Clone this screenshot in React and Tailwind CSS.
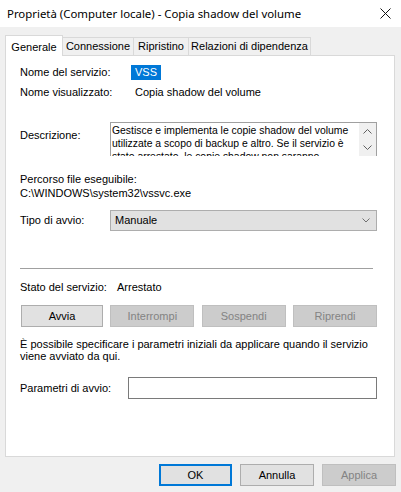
import React from "react";

const ui = { fontFamily: '"Liberation Sans", Arial, sans-serif' };
const title = { fontFamily: '"Noto Sans", "Open Sans", sans-serif' };

function Chevron({ up = false }) {
  return (
    <svg width="9" height="6" viewBox="0 0 9 6" className="block">
      <path
        d={up ? "M0.5 5.5 L4.5 1.5 L8.5 5.5" : "M0.5 0.5 L4.5 4.5 L8.5 0.5"}
        fill="none"
        stroke="#606060"
        strokeWidth="1"
      />
    </svg>
  );
}

function Btn({ children, disabled = false, focus = false, className = "" }) {
  const base = disabled
    ? "bg-[#cccccc] border-[#bfbfbf] text-[#838383]"
    : focus
    ? "bg-[#e1e1e1] border-[#0078d7] border-2 text-black"
    : "bg-[#e1e1e1] border-[#adadad] text-black";
  return (
    <div className={`flex items-center justify-center border ${base} ${className}`}>
      {children}
    </div>
  );
}

export default function App() {
  const tabs = [
    { label: "Generale", w: "w-[58px]" },
    { label: "Connessione", w: "w-[71px]" },
    { label: "Ripristino", w: "w-[55px]" },
    { label: "Relazioni di dipendenza", w: "w-[122px]" },
  ];

  const desc = [
    "Gestisce e implementa le copie shadow del volume",
    "utilizzate a scopo di backup e altro. Se il servizio è",
    "stato arrestato, le copie shadow non saranno",
  ];

  return (
    <div className="w-[401px] h-[492px] bg-[#f0f0f0] text-[11px] text-black overflow-hidden" style={ui}>
      {/* title bar */}
      <div className="h-[27px] bg-white flex items-center justify-between pl-[7px] pr-[10px]">
        <span className="text-[11.4px] text-black" style={title}>
          Proprietà (Computer locale) - Copia shadow del volume
        </span>
        <svg width="11" height="11" viewBox="0 0 11 11">
          <path d="M0.5 0.5 L10.5 10.5 M10.5 0.5 L0.5 10.5" stroke="#111" strokeWidth="1" />
        </svg>
      </div>

      {/* tabs */}
      <div className="pl-[5px] flex items-end h-[28px]">
        {tabs.map((t, i) =>
          i === 0 ? (
            <div
              key={t.label}
              className={`${t.w} h-[21px] bg-white border border-b-0 border-[#d9d9d9] flex items-start justify-center pt-[3px] relative z-10 -mb-px`}
            >
              {t.label}
            </div>
          ) : (
            <div
              key={t.label}
              className={`${t.w} h-[18px] bg-[#f0f0f0] border border-b-0 border-l-0 border-[#d9d9d9] flex items-center justify-center`}
            >
              {t.label}
            </div>
          )
        )}
      </div>

      {/* panel */}
      <div className="ml-[5px] w-[390px] h-[402px] bg-white border border-[#d9d9d9] pl-[14px] pr-[17px]">
        <div className="flex items-center h-[16px] mt-[8px]">
          <span className="w-[111px]">Nome del servizio:</span>
          <span className="bg-[#0078d7] text-white px-[4px] h-[15px] flex items-center">VSS</span>
        </div>
        <div className="flex items-center h-[16px] mt-[4px]">
          <span className="w-[111px]">Nome visualizzato:</span>
          <span className="pl-[4px]">Copia shadow del volume</span>
        </div>

        <div className="flex items-start mt-[22px]">
          <span className="w-[90px] mt-[5px]">Descrizione:</span>
          <div className="w-[267px] h-[34px] border border-b-0 border-[#a0a0a0] flex overflow-hidden">
            <div className="flex-1 pl-px pt-px text-[10.4px] leading-[13px] overflow-hidden">
              {desc.map((l) => (
                <div key={l} className="whitespace-nowrap">{l}</div>
              ))}
            </div>
            <div className="w-[17px] bg-[#f0f0f0] flex flex-col items-center justify-between py-[5px]">
              <Chevron up />
              <Chevron />
            </div>
          </div>
        </div>

        <div className="mt-[16px] leading-[14px]">Percorso file eseguibile:</div>
        <div className="leading-[14px]">C:\WINDOWS\system32\vssvc.exe</div>

        <div className="flex items-center mt-[10px]">
          <span className="w-[90px]">Tipo di avvio:</span>
          <div className="w-[267px] h-[21px] bg-[#e1e1e1] border border-[#adadad] flex items-center justify-between pl-[4px] pr-[6px]">
            <span>Manuale</span>
            <svg width="8" height="5" viewBox="0 0 8 5">
              <path d="M0.5 0.5 L4 4 L7.5 0.5" fill="none" stroke="#707070" strokeWidth="1" />
            </svg>
          </div>
        </div>

        <div className="mt-[37px] h-px w-[353px] bg-[#a0a0a0]" />

        <div className="flex items-center h-[16px] mt-[10px]">
          <span className="w-[97px]">Stato del servizio:</span>
          <span>Arrestato</span>
        </div>

        <div className="flex justify-between mt-[10px] pl-px">
          <Btn className="w-[82px] h-[22px]">Avvia</Btn>
          <Btn disabled className="w-[84px] h-[22px]">Interrompi</Btn>
          <Btn disabled className="w-[84px] h-[22px]">Sospendi</Btn>
          <Btn disabled className="w-[84px] h-[22px]">Riprendi</Btn>
        </div>

        <div className="mt-[11px] leading-[12px]">
          È possibile specificare i parametri iniziali da applicare quando il servizio
          <br />
          viene avviato da qui.
        </div>

        <div className="flex items-center mt-[15px]">
          <span className="w-[108px]">Parametri di avvio:</span>
          <div className="w-[249px] h-[22px] border border-[#7a7a7a] bg-white" />
        </div>
      </div>

      {/* footer buttons */}
      <div className="flex justify-end gap-[8px] pr-[5px] mt-[7px]">
        <Btn focus className="w-[73px] h-[22px]">OK</Btn>
        <Btn className="w-[74px] h-[22px]">Annulla</Btn>
        <Btn disabled className="w-[74px] h-[22px]">Applica</Btn>
      </div>
    </div>
  );
}
